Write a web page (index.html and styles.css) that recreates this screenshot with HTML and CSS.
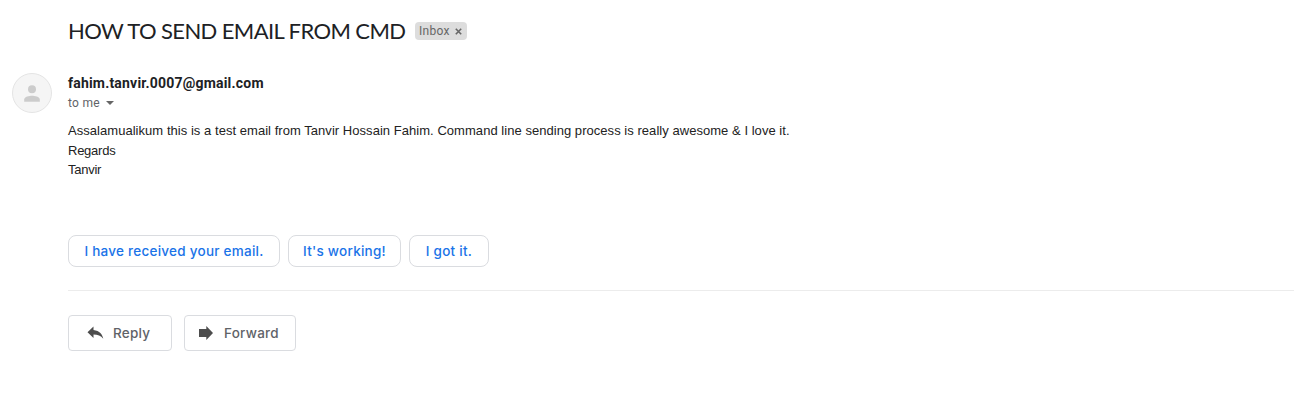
FILE: index.html
```html
<!DOCTYPE html>
<html lang="en">
<head>
<meta charset="utf-8">
<title>HOW TO SEND EMAIL FROM CMD</title>
<link rel="stylesheet" href="styles.css">
</head>
<body>
<main class="mail">
  <header class="subject">
    <h1 class="subject-text">HOW TO SEND EMAIL FROM CMD</h1>
    <span class="label"><span class="label-name">Inbox</span><svg class="label-close" width="7" height="7" viewBox="0 0 7 7"><path d="M.8.8l5.4 5.4M6.2.8L.8 6.2" stroke="#666" stroke-width="1.6"/></svg></span>
  </header>
  <section class="message">
    <svg class="avatar" width="40" height="40" viewBox="0 0 40 40"><circle cx="20" cy="20" r="19.5" fill="#f5f5f5" stroke="#e4e4e4"/><circle cx="20" cy="16.2" r="4" fill="#ccc"/><path d="M12.2 28.8v-2.3c0-2.700 5.200-3.700 7.800-3.700s7.800 1 7.800 3.700v2.3z" fill="#ccc"/></svg>
    <div class="content">
      <div class="sender"><span class="sender-name">fahim.tanvir.0007@gmail.com</span></div>
      <div class="recipient"><span class="recipient-name">to me</span><svg width="8" height="4" viewBox="0 0 8 4"><path d="M0 0h8L4 4z" fill="#666"/></svg></div>
      <div class="body-text">
        <p class="lead">Assalamualikum this is a test email from Tanvir Hossain Fahim. Command line sending process is really awesome &amp; I love it.</p>
        <p class="signoff">Regards</p>
        <p class="signoff">Tanvir</p>
      </div>
      <div class="suggestions">
        <button class="chip chip-received"><span>I have received your email.</span></button>
        <button class="chip chip-working"><span>It's working!</span></button>
        <button class="chip chip-got"><span>I got it.</span></button>
      </div>
      <div class="actions">
        <button class="action reply"><svg width="17" height="14" viewBox="0 0 17 14"><path d="M6.500 4V.5L.5 6.300l6 5.800V8.600c4.300 0 7.400 1.200 9.800 4.100C15.400 8.500 12.700 4.800 6.500 4z" fill="#4d4d4d"/></svg><span>Reply</span></button>
        <button class="action forward"><svg width="15" height="14" viewBox="0 0 15 14"><path d="M0 3h7.300V0L14 7l-6.700 7v-3H0z" fill="#4d4d4d"/></svg><span>Forward</span></button>
      </div>
    </div>
  </section>
</main>
</body>
</html>
```
FILE: styles.css
```css
* { box-sizing: border-box; }
body { margin: 0; background: #fff; color: #202124; font-family: "Liberation Sans", Arial, sans-serif; }
.mail { height: 401px; overflow: hidden; }
.subject { display: flex; align-items: center; gap: 10px; height: 62px; padding: 0 0 0 68px; }
.subject-text { margin: 0; width: 337px; font: 400 22px/28px Lato, sans-serif; letter-spacing: -.6px; white-space: nowrap; }
.label { display: flex; align-items: center; justify-content: space-between; width: 52px; height: 18px; padding: 0 5px 0 4px; border-radius: 4px; background: #ddd; color: #666; font: 12px/18px Roboto, sans-serif; letter-spacing: .3px; }
.label-close { margin-top: 1px; }
.message { display: flex; padding: 11px 0 0 12px; }
.avatar { flex: none; margin-right: 16px; }
.content { flex: 1; min-width: 0; }
.sender { height: 20px; font: 700 14px/20px Roboto, sans-serif; letter-spacing: .2px; }
.recipient { display: flex; align-items: center; gap: 6px; height: 20px; color: #5f6368; font: 12px/20px Roboto, sans-serif; letter-spacing: .3px; }
.body-text { height: 122px; padding-top: 8px; font-size: 13px; line-height: 19.5px; color: #222; }
.body-text p { margin: 0; white-space: nowrap; }
.lead { letter-spacing: .042px; }
.signoff { letter-spacing: -.25px; }
.suggestions { display: flex; gap: 8px; height: 56px; border-bottom: 1px solid #ececec; }
.chip, .action { display: flex; align-items: center; justify-content: center; padding: 0; background: #fff; border: 1px solid #dadce0; white-space: nowrap; font: 500 13.5px/20px Inter, sans-serif; letter-spacing: .25px; }
.chip { height: 32px; border-radius: 8px; color: #1a73e8; }
.chip-received { width: 212px; }
.chip-working { width: 113px; }
.chip-got { width: 80px; }
.actions { display: flex; gap: 12px; padding-top: 24px; }
.action { height: 36px; border-radius: 4px; color: #5f6368; justify-content: flex-start; }
.reply { width: 104px; padding-left: 18px; gap: 9px; }
.forward { width: 112px; padding-left: 14px; gap: 10px; }
```
